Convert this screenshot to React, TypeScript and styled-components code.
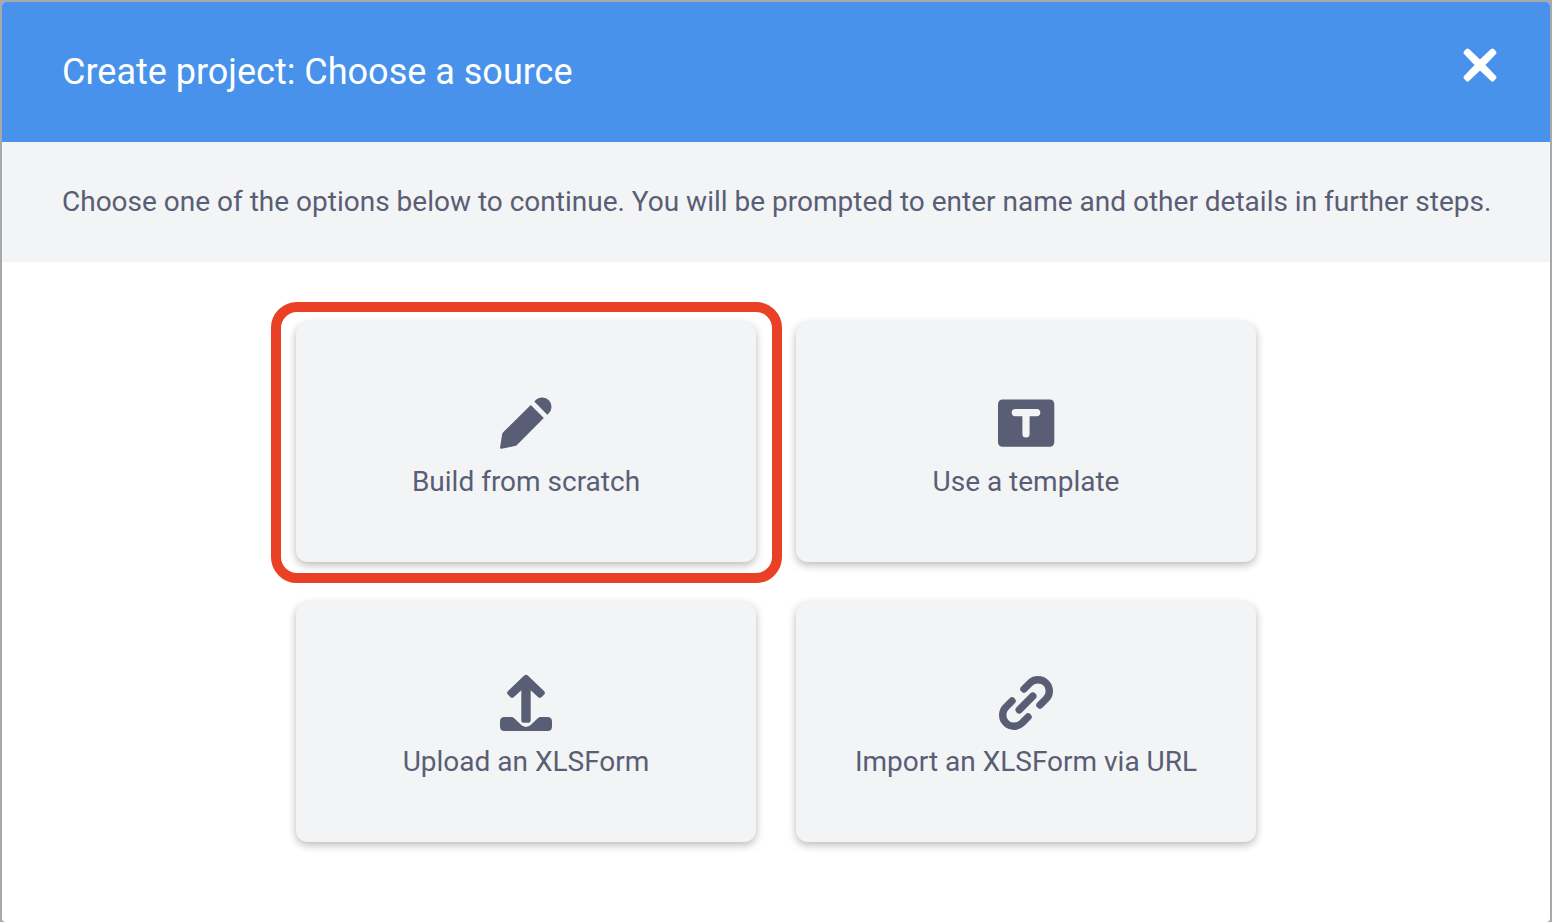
import React from "react";
import styled, { createGlobalStyle } from "styled-components";

const GlobalStyle = createGlobalStyle`
  * { box-sizing: border-box; }
  body {
    margin: 0;
    background: #a8a8ae;
    color: #595e74;
    font-family: Roboto, "Liberation Sans", sans-serif;
  }
`;

const Backdrop = styled.div`
  display: flex;
  min-height: 100vh;
  padding: 2px 2px 0;
`;

const Modal = styled.main`
  flex: 1;
  min-width: 0;
  background: #fff;
  border-radius: 4px;
  overflow: hidden;
`;

const Header = styled.header`
  display: flex;
  align-items: flex-start;
  justify-content: space-between;
  height: 140px;
  padding: 40px 50px 0 60px;
  background: #4892eb;
  color: #fff;
`;

const Title = styled.h1`
  margin: 0;
  font-size: 36px;
  font-weight: 400;
  line-height: 60px;
`;

const CloseButton = styled.button`
  display: flex;
  margin-top: 3px;
  padding: 0;
  border: 0;
  background: none;
  color: inherit;
  cursor: pointer;
`;

const Intro = styled.p`
  margin: 0;
  padding: 40px 40px 40px 60px;
  background: #f2f4f6;
  font-size: 28px;
  line-height: 40px;
`;

const Sources = styled.div`
  display: grid;
  grid-template-columns: repeat(2, minmax(0, 460px));
  gap: 40px;
  justify-content: center;
  padding: 60px 60px 80px;
`;

const SourceButton = styled.button`
  display: flex;
  flex-direction: column;
  align-items: center;
  width: 100%;
  height: 240px;
  padding: 71px 20px 0;
  border: 0;
  border-radius: 12px;
  background: #f2f4f6;
  box-shadow: 0 3px 8px rgba(0, 0, 0, 0.28);
  color: inherit;
  font-family: inherit;
  font-size: 28px;
  line-height: 36px;
  cursor: pointer;
`;

const SourceItem = styled.div<{ $highlighted?: boolean }>`
  position: relative;
  ${({ $highlighted }) =>
    $highlighted &&
    `
    &::after {
      content: "";
      position: absolute;
      inset: -20px -26px -21px -25px;
      border: 10px solid #ea4025;
      border-radius: 26px;
      pointer-events: none;
    }
  `}
`;

const Icon = styled.svg`
  display: block;
  width: 60px;
  height: 60px;
  margin-bottom: 11px;
`;

const CloseIcon = styled.svg`
  display: block;
  width: 40px;
  height: 40px;
`;

const PencilIcon = () => (
  <Icon viewBox="0 0 60 60" fill="currentColor" aria-hidden="true">
    <path d="M34.8 12 47.8 24.9 21.2 51.7Q20.2 52.8 18.8 53.1L5.6 55.8Q3.8 56 4.1 54.2L6.1 41.4Q6.3 40.2 7.2 39.3Z" />
    <path d="M38.3 8.6 40.3 6.6A9.3 9.3 0 0 1 53.3 19.8L51.3 21.7Z" />
  </Icon>
);

const TemplateIcon = () => (
  <Icon viewBox="0 0 60 60" aria-hidden="true">
    <rect x="2" y="6.5" width="56.3" height="47.2" rx="4.5" fill="currentColor" />
    <path d="M19.3 19.6H40.7M30 19.6V41" fill="none" stroke="#f2f4f6" strokeWidth="7.2" strokeLinecap="round" />
  </Icon>
);

const UploadIcon = () => (
  <Icon viewBox="0 0 60 60" fill="currentColor" aria-hidden="true">
    <path d="M28.2 2.5Q30 1 31.8 2.5L48 18.1Q49.8 19.8 48.2 21.5L45.4 24.2Q43.7 25.6 42 24.1L34.7 17.2V47.5Q34.7 49.7 32.5 49.7H27.5Q25.3 49.7 25.3 47.5V17.2L18 24.1Q16.3 25.6 14.6 24.2L11.8 21.5Q10.2 19.8 12 18.1Z" />
    <path d="M8.5 44H15.5Q17 44 18.2 45.2L24.5 51.3Q27 54 30 54T35.5 51.3L41.8 45.2Q43 44 44.5 44H51.5Q56 44 56 48.5V53.5Q56 58 51.5 58H8.5Q4 58 4 53.5V48.5Q4 44 8.5 44Z" />
  </Icon>
);

const LinkIcon = () => (
  <Icon viewBox="0 0 60 60" fill="none" stroke="currentColor" strokeWidth="7.4" strokeLinecap="round" aria-hidden="true">
    <path d="M28 16 34 10A11.2 11.2 0 0 1 50 26L44 32" />
    <path d="M32 44 26 50A11.2 11.2 0 0 1 10 34L16 28" />
    <path d="M23.2 36.8 36.8 23.2" />
  </Icon>
);

const sources = [
  { label: "Build from scratch", Glyph: PencilIcon, highlighted: true },
  { label: "Use a template", Glyph: TemplateIcon },
  { label: "Upload an XLSForm", Glyph: UploadIcon },
  { label: "Import an XLSForm via URL", Glyph: LinkIcon },
];

export default function App() {
  return (
    <>
      <GlobalStyle />
      <Backdrop>
        <Modal role="dialog" aria-labelledby="modal-title">
          <Header>
            <Title id="modal-title">Create project: Choose a source</Title>
            <CloseButton type="button" aria-label="Close">
              <CloseIcon viewBox="0 0 40 40" aria-hidden="true">
                <path
                  d="M7.6 5.5 20 17.2 32.4 5.5 34.5 7.6 22.8 20 34.5 32.4 32.4 34.5 20 22.8 7.6 34.5 5.5 32.4 17.2 20 5.5 7.6Z"
                  fill="currentColor"
                  stroke="currentColor"
                  strokeWidth="4"
                  strokeLinejoin="round"
                />
              </CloseIcon>
            </CloseButton>
          </Header>
          <Intro>
            Choose one of the options below to continue. You will be prompted to enter name and other details in further
            steps.
          </Intro>
          <Sources>
            {sources.map(({ label, Glyph, highlighted }) => (
              <SourceItem key={label} $highlighted={highlighted}>
                <SourceButton type="button">
                  <Glyph />
                  {label}
                </SourceButton>
              </SourceItem>
            ))}
          </Sources>
        </Modal>
      </Backdrop>
    </>
  );
}
